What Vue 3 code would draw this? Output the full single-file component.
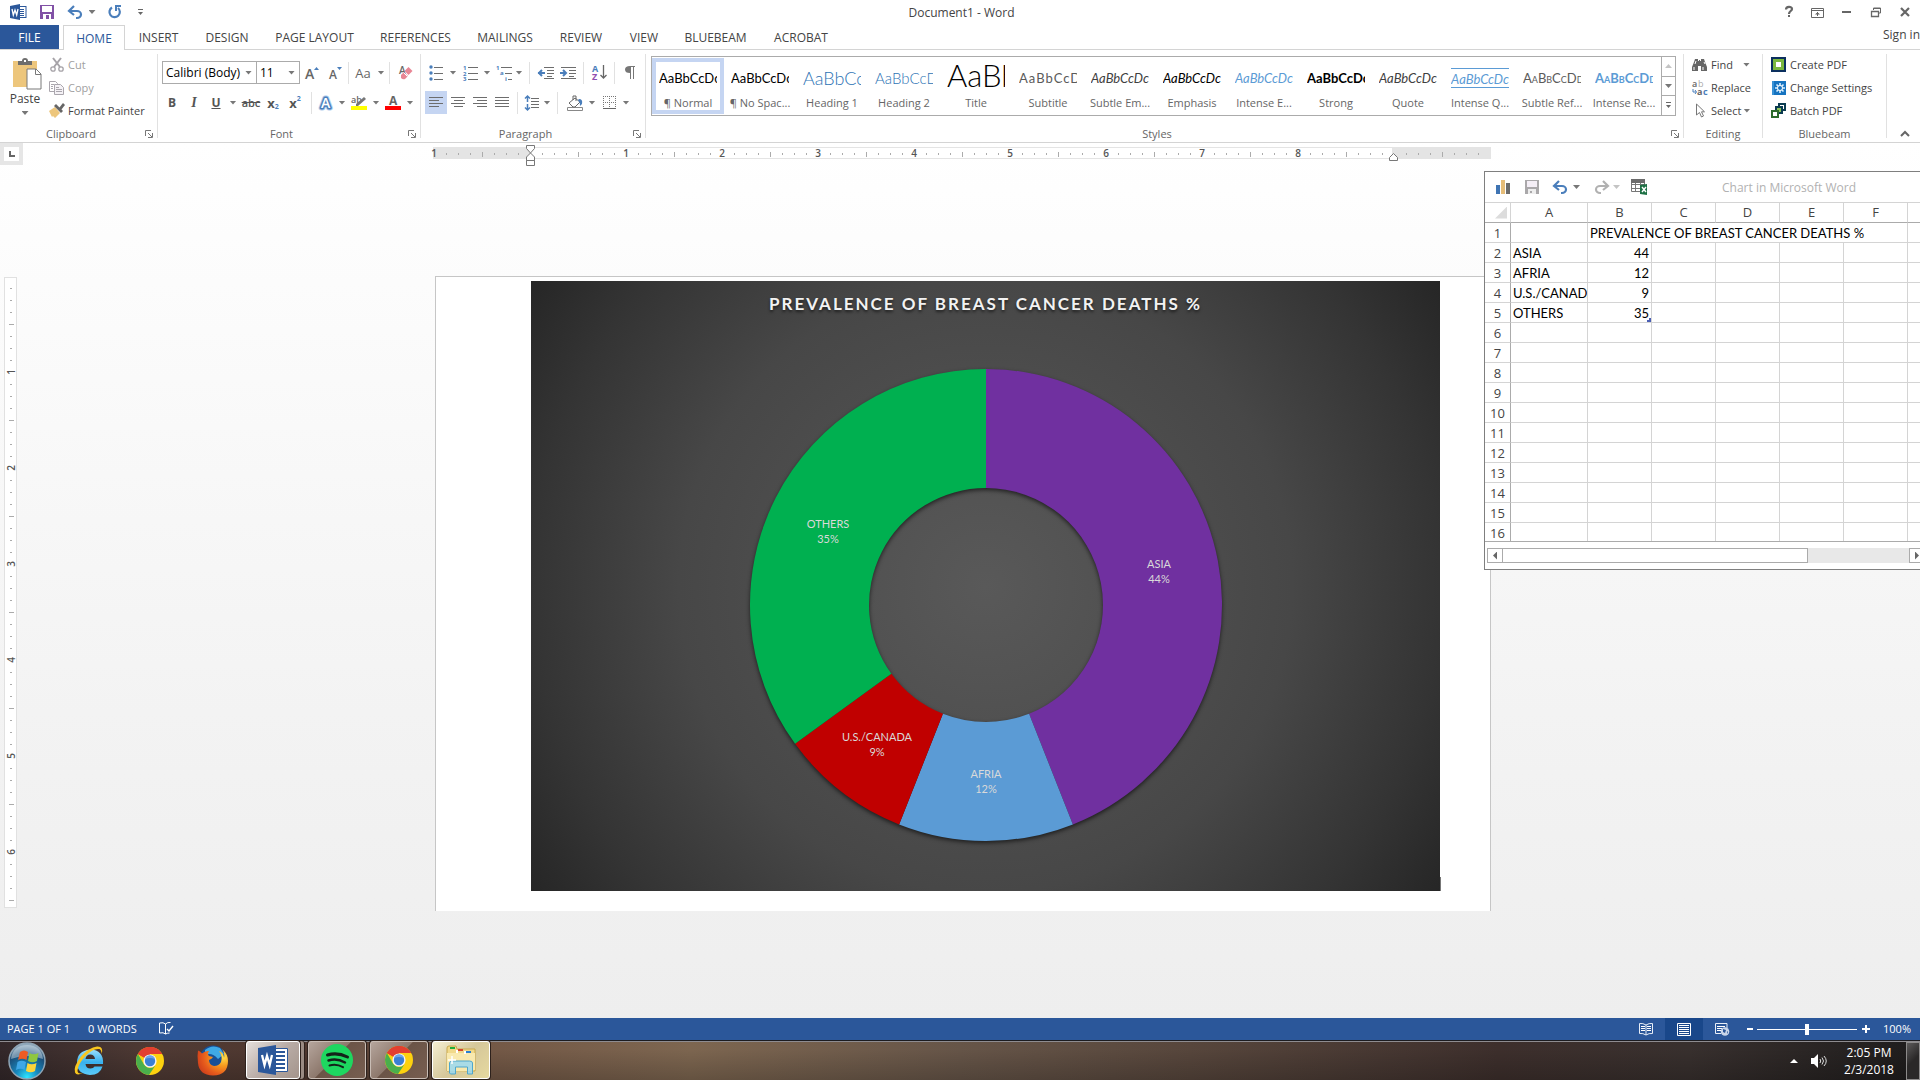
<script setup>
import { h, ref } from 'vue'

const blue = '#4a7ebb'
const grey = '#6d6d6d'
const lines = (rows, c = grey) => rows.map(([x, y, w]) => `<rect x="${x}" y="${y}" width="${w}" height="1" fill="${c}"/>`).join('')
const chromeBody = `<circle cx="14" cy="14" r="14" fill="#fdd10f"/><path d="M14 14 1.9 7A14 14 0 0 1 26.1 7L14 7z" fill="#de3a2b"/><path d="M14 0a14 14 0 0 1 12.1 7H14a7 7 0 0 0-6 3.5L1.9 7A14 14 0 0 1 14 0z" fill="#e23f30"/><path d="M1.9 7A14 14 0 0 0 13 28l6.2-9.3A7 7 0 0 1 8 17.6z" fill="#4aaf4c"/><circle cx="14" cy="14" r="6.6" fill="#f4f4f4"/><circle cx="14" cy="14" r="5.2" fill="#3b7fd4"/><path d="M9 12a5.2 5.2 0 0 1 10 0q-5-2-10 0z" fill="#6fa5e6"/>`

/* [width, height, drawing] */
const icons = {
  word: [17, 16, `<rect x="9" y="2.500" width="7" height="11" fill="#fff" stroke="#2b579a"/>${lines([[10, 5, 4], [10, 7, 4], [10, 9, 4], [10, 11, 4]], '#2b579a')}<path d="M0 2 10 0v16L0 14z" fill="#2b579a"/><path d="m2 5 1.300 6L5 6l1.700 5L8 5" fill="none" stroke="#fff" stroke-width="1.300"/>`],
  save: [14, 14, `<path d="M0 0h14v14H0z" fill="#8151a6"/><path d="M2 1h10v6H2z" fill="#fff"/><path d="M3 9h8v5H3z" fill="#fff"/><path d="M6 10h3v4H6z" fill="#8151a6"/>`],
  saveGrey: [14, 14, `<path d="M0 0h14v14H0z" fill="#aaa8aa"/><path d="M2 1h10v6H2z" fill="#f4eef6"/><path d="M3 9h8v5H3z" fill="#eee"/><path d="M5 11h2v2H5z" fill="#aaa8aa"/>`],
  undo: [15, 13, `<path d="M2 5h7a4 3.500 0 0 1 0 7H8" fill="none" stroke="${blue}" stroke-width="2.200"/><path d="M6 0 1 5l5 4" fill="none" stroke="${blue}" stroke-width="2.200"/>`],
  redoGrey: [15, 13, `<path d="M13 5H6a4 3.500 0 0 0 0 7h1" fill="none" stroke="#b1b1b1" stroke-width="2.200"/><path d="m9 0 5 5-5 4" fill="none" stroke="#b1b1b1" stroke-width="2.200"/>`],
  redo: [14, 14, `<path d="M4 2.500a5.200 5.200 0 1 0 6 .5" fill="none" stroke="${blue}" stroke-width="2.200"/><path d="M8 6V1h5" fill="none" stroke="${blue}" stroke-width="2"/>`],
  more: [7, 7, `<path d="M1 0h5v1H1z" fill="#666"/><path d="M1 3h5L3.500 6z" fill="#666"/>`],
  help: [8, 12, `<path d="M1 3.500C1 0 7 0 7 3c0 2-3 2.200-3 5" fill="none" stroke="#666" stroke-width="2.200"/><path d="M3 9h2v2H3z" fill="#666"/>`],
  display: [13, 11, `<path d="M.5 1.500h12v9H.5zM.5 3.500h12" fill="none" stroke="#666"/><path d="M6 5h1v4H6zM4 7.500 6.500 5 9 7.500z" fill="#666"/>`],
  min: [9, 3, '<path d="M0 0h9v2H0z" fill="#666"/>'],
  restore: [10, 10, `<path d="M2.500 3V1h7v5H8M2 1.500h8" fill="none" stroke="#666"/><path d="M.5 4.500h7v5h-7zM0 4.500h8" fill="none" stroke="#666" stroke-width="1.300"/>`],
  close: [10, 10, '<path d="m1 1 8 8M9 1 1 9" stroke="#666" stroke-width="2.200"/>'],
  paste: [30, 32, `<path d="M1 3h24v26H1z" fill="#edc67c"/><path d="M6 7V3h4q0-3 3-3t3 3h4v4z" fill="#6d6d6d"/><path d="M12 2h2v2h-2z" fill="#fff"/><path d="M15 11h9l5 5v15H15z" fill="#fff" stroke="#787878"/><path d="M23.500 11v5.500H29" fill="none" stroke="#787878"/>`],
  cut: [14, 14, `<path d="m3 0 7 9M11 0 4 9" stroke="#a6a3a8" stroke-width="2"/><circle cx="3" cy="11" r="2.200" fill="none" stroke="#a6a3a8" stroke-width="1.300"/><circle cx="11" cy="11" r="2.200" fill="none" stroke="#a6a3a8" stroke-width="1.300"/>`],
  copy: [15, 14, `<path d="M.5.5h6l2 2v8h-8z" fill="#fff" stroke="#aaa6ad"/><path d="M5.500 3.500h6l3 3v7h-9z" fill="#f5f2f6" stroke="#aaa6ad"/>${lines([[2, 3, 3], [2, 5, 2], [2, 7, 2], [7, 6, 3], [7, 8, 6], [7, 10, 6]], '#aaa6ad')}`],
  painter: [16, 15, `<path d="m0 8 6-4 5 6-5 5-2-2-1 1z" fill="#edc67c"/><path d="m5 3 2-2 7 7-2 2z" fill="#666"/><path d="m10 5 4-5 2 2-4 5z" fill="#666"/>`],
  launch: [8, 8, `<path d="M.5 6V.5H6" fill="none" stroke="#777"/><path d="m3 3 4 4M7.500 3v4.500H3" fill="none" stroke="#777"/>`],
  grow: [14, 14, `<path d="M9 4h5l-2.500-3z" fill="${blue}"/><text x="0" y="13" font-size="14" font-weight="600" fill="#666">A</text>`],
  shrink: [14, 14, `<path d="M9 1h5l-2.500 3z" fill="${blue}"/><text x="1" y="13" font-size="12" font-weight="600" fill="#666">A</text>`],
  eraser: [15, 15, `<text x="1" y="9" font-size="10" font-weight="600" fill="#666">A</text><path d="m3 10 3-3 4 4-3 3q-2 1-4-1z" fill="#e88594"/><path d="m6.500 6 4-4 4 4-4 4z" fill="#e88594"/><path d="m5.500 7.500 4 4" stroke="#fff"/>`],
  fx: [16, 16, `<g font-size="14" font-weight="600" stroke-linejoin="round" style="paint-order:stroke"><text x="3" y="13" fill="#b5d0ee" stroke="#b5d0ee" stroke-width="5">A</text><text x="3" y="13" fill="#fff" stroke="${blue}" stroke-width="3">A</text></g>`],
  highlight: [16, 15, `<text x="0" y="8" font-size="9" font-weight="600" fill="#666">ab</text><path d="m5 9 8-7 2 2-8 7H5z" fill="#777"/><path d="M0 11h16v4H0z" fill="#ff0"/>`],
  fontColor: [16, 15, `<text x="4" y="10" font-size="12" font-weight="700" fill="#666">A</text><path d="M0 11h16v4H0z" fill="#f00"/>`],
  bullets: [14, 16, `<circle cx="2" cy="2" r="1.700" fill="${blue}"/><circle cx="2" cy="8" r="1.700" fill="${blue}"/><circle cx="2" cy="14" r="1.700" fill="${blue}"/>${lines([[5, 2, 9], [5, 8, 9], [5, 14, 9]])}`],
  numbers: [15, 16, `<g font-size="6" font-weight="700" fill="${blue}"><text x="0" y="5">1</text><text x="0" y="11">2</text><text x="0" y="16">3</text></g>${lines([[5, 2, 10], [5, 8, 10], [5, 14, 10]])}`],
  multi: [17, 16, `<g font-size="6" font-weight="700" fill="${blue}"><text x="0" y="5">1</text><text x="4" y="10">a</text><text x="9" y="16">i</text></g>${lines([[5, 2, 11], [9, 8, 7], [12, 14, 4]])}`],
  outdent: [16, 12, `<path d="M0 6h7M4 3 1 6l3 3" fill="none" stroke="${blue}" stroke-width="2"/>${lines([[6, 0, 10], [9, 3, 7], [9, 6, 7], [9, 9, 5], [6, 11, 10]])}`],
  indent: [16, 12, `<path d="M0 6h6M3 3l3 3-3 3" fill="none" stroke="${blue}" stroke-width="2"/>${lines([[1, 0, 15], [9, 3, 7], [9, 6, 7], [9, 9, 5], [1, 11, 15]])}`],
  sort: [15, 17, `<text x="0" y="8" font-size="9" font-weight="700" fill="${blue}">A</text><text x="0" y="16" font-size="9" font-weight="700" fill="#8f4fb0">Z</text><path d="M11.500 1v13M8.500 11l3 3 3-3" fill="none" stroke="#666" stroke-width="1.300"/>`],
  pilcrow: [10, 13, `<path d="M10 0v1H9v12H8V1H6v12H5V7Q0 7 0 3.500T5 0z" fill="#777"/>`],
  left: [14, 11, lines([[0, 0, 14], [0, 3, 10], [0, 6, 14], [0, 9, 10]])],
  center: [14, 11, lines([[0, 0, 14], [3, 3, 9], [0, 6, 14], [3, 9, 9]])],
  right: [14, 11, lines([[0, 0, 14], [4, 3, 10], [0, 6, 14], [4, 9, 10]])],
  justify: [14, 11, lines([[0, 0, 14], [0, 3, 14], [0, 6, 14], [0, 9, 14]])],
  spacing: [15, 16, `<path d="M2.500 1v6M0 3.500 2.500 1 5 3.500M2.500 9v6M0 12.500 2.500 15 5 12.500" fill="none" stroke="${blue}" stroke-width="1.500"/>${lines([[6, 3, 8], [6, 6, 8], [6, 9, 8], [6, 12, 8]])}`],
  shading: [17, 16, `<path d="M.5 12.500h15v3H.5z" fill="#fff" stroke="#888"/><path d="m2 8 6-5 5 4-5 5H6z" fill="#fff" stroke="#666"/><path d="M6 5V1h3v5" fill="none" stroke="#666"/><path d="M12 4q4 0 3 5l-2 2q0-4-2-6z" fill="${blue}"/>`],
  borders: [13, 13, `<path d="M.5 0v12M12.500 0v12M6.500 0v12M0 .5h13M0 6.500h13" stroke="#777" stroke-dasharray="1 1" fill="none"/><path d="M0 12h13v1H0z" fill="#666"/>`],
  find: [15, 13, `<path d="M3 1h3v2h1V2h1v1h1V1h3l1 3 2 5v4H9V8H6v5H0V9l2-5z" fill="#666"/><path d="M2 9v3M11 9v3M4 3l-1 3M12 4l1 2" stroke="#fff"/>`],
  replace: [16, 16, `<text x="0" y="7" font-size="9" font-weight="600" fill="#666">a</text><text x="6" y="7" font-size="9" fill="#aaa">b</text><text x="5" y="15" font-size="9" font-weight="700" fill="#666">a</text><text x="11" y="15" font-size="9" font-weight="700" fill="${blue}">c</text><path d="M1 9v3h3M3 10l1.500 2L3 14" fill="none" stroke="${blue}"/>`],
  select: [10, 15, `<path d="M1.500 1v11l3-2.500 2 4.500 2-1-2-4.200h3z" fill="#fff" stroke="#777"/>`],
  create: [15, 15, `<path d="M0 0h15v15H0z" fill="#0b2f5e"/><path d="M2 2h11v11H2z" fill="#7ab83f"/><path d="M5 5h5v5H5z" fill="#fff"/>`],
  settings: [14, 14, `<path d="M0 0h14v14H0z" fill="#1673c0"/><path d="M1 0v14" stroke="#5fb1ea"/><path d="M8 2v10M3 7h10M4.500 3.500l7 7M11.500 3.500l-7 7" stroke="#d9efff" stroke-width="1.600"/><circle cx="8" cy="7" r="2.500" fill="#1673c0" stroke="#fff"/>`],
  batch: [15, 15, `<g stroke="#0b3b50" stroke-width="2" fill="#fff"><path d="M8 1h6v6H8z"/><path d="M5 4h6v6H5z" fill="#8fc45a"/><path d="M1 8h6v6H1z" stroke="#2d6b2d"/></g><path d="M3 10h2v2H3z" fill="#fff"/>`],
  collapse: [10, 6, '<path d="m1 5 4-4 4 4" fill="none" stroke="#666" stroke-width="2"/>'],
  chart: [15, 14, `<path d="M0 5h4v9H0z" fill="#3f74b3"/><path d="M5 0h4v14H5z" fill="#e6bd78"/><path d="M10 3h4v11h-4z" fill="#6b6b6b"/>`],
  sheet: [17, 16, `<path d="M.5 1.500h13v11H.5zM.5 5.500h13M.5 9.500h13M4.500 2v10M9.500 2v10" fill="#fff" stroke="#777"/><path d="M0 0h14v4H0z" fill="#6b6b6b"/><path d="m9 6 7-1v11l-7-1z" fill="#1e7145"/><path d="m11 8 4 5M15 8l-4 5" stroke="#fff" stroke-width="1.400"/>`],
  proof: [15, 14, `<path d="M6.500 2v10q-2-2-6-1V1q4-1 6 1 2-2 5-1.500M6.500 12q2-1 4-1" fill="none" stroke="#fff"/><path d="m8 7 2 2 4-5" fill="none" stroke="#fff" stroke-width="1.400"/>`],
  read: [14, 13, `<path d="M7 2Q4 0 .5.500v10Q4 10 7 12q3-2 6.500-1.500V.500Q10 0 7 2v10" fill="none" stroke="#e8eef7"/>${lines([[2, 3, 4], [2, 5, 4], [2, 7, 4], [8, 3, 4], [8, 5, 4], [8, 7, 4]], '#fff')}`],
  print: [14, 13, `<path d="M.5.500h13v12H.5z" fill="none" stroke="#fff"/>${lines([[2, 2, 10], [2, 4, 10], [2, 6, 10], [2, 8, 10], [2, 10, 10]], '#fff')}`],
  web: [15, 13, `<path d="M12 5V.500H.500v10H6" fill="none" stroke="#e8eef7"/>${lines([[2, 3, 8], [2, 5, 5], [2, 7, 4]], '#fff')}<circle cx="10" cy="8.500" r="4.300" fill="#c9d6ea"/><path d="m8 6 3 1-1 3-2-1zM12 8l1 1-1 2z" fill="#2b579a"/>`],
  orb: [38, 38, `<defs><radialGradient id="orb" cx=".5" cy=".95" r=".9"><stop offset="0" stop-color="#2ee6ff"/><stop offset=".35" stop-color="#1787bd"/><stop offset=".75" stop-color="#1b4d77"/><stop offset="1" stop-color="#8fa9bb"/></radialGradient></defs><circle cx="19" cy="19" r="18" fill="url(#orb)" stroke="#8fa5b5" stroke-width="1.500"/><path d="M3 17Q5 3 19 3t16 14q-16-6-32 0z" fill="#dfeaf2" opacity=".45"/><path d="M12 10q4-3 8 0l-1.500 8q-4-2.500-8.500 0z" fill="#ee5b23"/><path d="M21.500 11q4 2.500 9 0L29 19q-4 2.500-9 0z" fill="#8fc73e"/><path d="M9.500 20q4-2.500 8.500 0L16.500 28q-4-2.500-8.500 0z" fill="#3fa7e6"/><path d="M19.500 21q4 2.500 9 0L27 29q-4 2.500-9 0z" fill="#fdd43a"/>`],
  ie: [31, 31, `<defs><linearGradient id="ieg" x2="0" y2="1"><stop stop-color="#9be0fb"/><stop offset=".5" stop-color="#38b1ee"/><stop offset="1" stop-color="#5ccaf7"/></linearGradient></defs><path d="M30 19H12.500q.5 4.500 5 4.500 3 0 4-2h8Q27 30 17 30 4 29 4 17.500T17 4.500Q31 5 30 19zM12.500 14h9.500q-.5-4.500-4.700-4.500T12.500 14z" fill="url(#ieg)"/><path d="M28.500 9Q31 1 24 1.500 16 2.500 8 11.500 0 22 2 27.500 3.500 31 10 28 4.500 29.500 4.500 25.500 5 19 12.500 11T26.500 4q2 1 2 5z" fill="#f8c61f"/>`],
  chrome: [28, 28, chromeBody],
  firefox: [31, 31, `<defs><radialGradient id="fx" cx=".85" cy=".3" r=".95"><stop stop-color="#ffe14a"/><stop offset=".35" stop-color="#f79a1e"/><stop offset=".7" stop-color="#e65a1c"/><stop offset="1" stop-color="#c93a1b"/></radialGradient></defs><circle cx="16" cy="14" r="13.500" fill="#184f96"/><path d="M8 5q7-6 15-2l4 6-6 5q-6-7-13-4z" fill="#3fa9e6"/><path d="M1 5.500q2 .5 4 3Q8 5.500 12 6q-2 3 0 5l4 1q-1 2-4 3 0 5 5 6 5 0 7-4 2-5-2-11 5 2 5 7 1-5-2-9 6 5 6 12 0 14-15 14.500Q2 30 1 18 0 11 1 5.500z" fill="url(#fx)"/>`],
  wordBig: [31, 30, `<path d="M15.500 3.500h14v23h-14z" fill="#fff" stroke="#2b579a"/><path d="M18 7h9M18 11h9M18 15h9M18 19h9M18 23h9" stroke="#2b579a" stroke-width="2"/><path d="M0 3 18 0v30L0 27z" fill="#2b579a"/><path d="m4 10 2.500 10L9 11l2.700 9L14 10" fill="none" stroke="#fff" stroke-width="2.300"/>`],
  spotify: [32, 32, `<circle cx="16" cy="16" r="16" fill="#1ed760"/><g fill="none" stroke="#14221a" stroke-linecap="round"><path d="M6.500 11q10-3 20 2" stroke-width="3"/><path d="M7.500 16.500q8.500-2.500 16.500 2" stroke-width="2.500"/><path d="M8.500 21.500q7-2 13.500 1.700" stroke-width="2"/></g>`],
  explorer: [32, 30, `<path d="M2 3q0-2 2-2h7l1 3h18v22H2z" fill="#f1d98a" stroke="#c8a84e"/><path d="M5 2h5v2H5z" fill="#1fae3c"/><path d="M13 4h5v2h-5z" fill="#d5462b"/><path d="M21 6h5v2h-5z" fill="#2a7fd0"/><path d="M2 8h28v17q-8 2-28 1z" fill="#f9e9ae"/><path d="M12 5v3M20 6v3" stroke="#fff" stroke-width="2"/><path d="M4.500 28V18q0-2 3-2h17q3 0 3 2v11h-5v-7h-12v7h-5z" fill="#9bd8f0" fill-opacity=".85" stroke="#4fa6cc"/><path d="M7 11v8M3 15h8" stroke="#fff" stroke-width="1.500"/>`],
  up: [8, 5, '<path d="m0 5 4-4 4 4z" fill="#fff"/>'],
  speaker: [16, 14, `<path d="M0 4h3l4-4v14l-4-4H0z" fill="#fff"/><path d="M9 5q1.500 2 0 4M11 3.500q3 3.500 0 7M13 2q4.500 5 0 10" fill="none" stroke="#ddd"/>`],
}
const Icon = (p) => {
  const [w, ht, body] = icons[p.n]
  return h('svg', { width: w, height: ht, viewBox: `0 0 ${w} ${ht}`, overflow: 'visible', 'aria-hidden': 'true', 'font-family': 'Open Sans, sans-serif', innerHTML: body })
}

const tabs = ['INSERT', 'DESIGN', 'PAGE LAYOUT', 'REFERENCES', 'MAILINGS', 'REVIEW', 'VIEW', 'BLUEBEAM', 'ACROBAT']

/* toolbar entries: i = icon, t = text glyph, c = caret, s = separator */
const fontTop = [
  { i: 'grow', w: 24, l: 'Grow font' }, { i: 'shrink', w: 22, l: 'Shrink font' }, { s: 1, w: 4 },
  { t: 'Aa', k: 'aa', w: 26 }, { c: 1, w: 10, l: 'Case options' }, { s: 1, w: 6 }, { i: 'eraser', w: 26, l: 'Clear formatting' },
]
const fontBottom = [
  { t: 'B', k: 'b', w: 22 }, { t: 'I', k: 'i', w: 22 }, { t: 'U', k: 'u', w: 22 }, { c: 1, w: 12, l: 'Underline options' },
  { t: 'abc', k: 'strike', w: 24 }, { t: 'x', sub: '2', k: 'x', w: 20 }, { t: 'x', sup: '2', k: 'x', w: 24 }, { s: 1, w: 8 },
  { i: 'fx', w: 22, l: 'Text effects' }, { c: 1, w: 10, l: 'Text effect options' },
  { i: 'highlight', w: 24, l: 'Highlight' }, { c: 1, w: 10, l: 'Highlight options' },
  { i: 'fontColor', w: 24, l: 'Font color' }, { c: 1, w: 10, l: 'Font color options' },
]
const paraTop = [
  { i: 'bullets', w: 22, l: 'Bullets' }, { c: 1, w: 12, l: 'Bullet options' }, { i: 'numbers', w: 22, l: 'Numbering' }, { c: 1, w: 12, l: 'Number options' },
  { i: 'multi', w: 22, l: 'Multilevel list' }, { c: 1, w: 8, l: 'List options' }, { s: 1, w: 12 },
  { i: 'outdent', w: 22, l: 'Decrease indent' }, { i: 'indent', w: 22, l: 'Increase indent' }, { s: 1, w: 8 },
  { i: 'sort', w: 24, l: 'Sort' }, { s: 1, w: 6 }, { i: 'pilcrow', w: 26, l: 'Show marks' },
]
const paraBottom = [
  { i: 'left', w: 22, l: 'Align left', on: true }, { i: 'center', w: 22, l: 'Center' }, { i: 'right', w: 22, l: 'Align right' }, { i: 'justify', w: 22, l: 'Justify' },
  { s: 1, w: 8 }, { i: 'spacing', w: 22, l: 'Line spacing' }, { c: 1, w: 8, l: 'Spacing options' }, { s: 1, w: 12 },
  { i: 'shading', w: 24, l: 'Shading' }, { c: 1, w: 10, l: 'Shading options' }, { i: 'borders', w: 24, l: 'Borders' }, { c: 1, w: 10, l: 'Border options' },
]
const styleList = [
  ['¶ Normal', 'AaBbCcDc', 'normal'], ['¶ No Spac...', 'AaBbCcDc', 'normal'], ['Heading 1', 'AaBbCc', 'h1'], ['Heading 2', 'AaBbCcD', 'h2'],
  ['Title', 'AaBb', 'title'], ['Subtitle', 'AaBbCcD', 'subtitle'], ['Subtle Em...', 'AaBbCcDc', 'subtle'], ['Emphasis', 'AaBbCcDc', 'em'],
  ['Intense E...', 'AaBbCcDc', 'intense'], ['Strong', 'AaBbCcDc', 'strong'], ['Quote', 'AaBbCcDc', 'subtle'], ['Intense Q...', 'AaBbCcDc', 'intense ruled'],
  ['Subtle Ref...', 'AaBbCcDd', 'caps'], ['Intense Re...', 'AaBbCcDd', 'caps bluecaps'],
]

/* ruler marks: one every eighth of an inch, 96px to the inch */
const ticks = (from, to) => {
  const out = []
  for (let k = from; k <= to; k++) out.push({ p: k * 12, n: k % 8 === 0 && k ? Math.abs(k / 8) : 0, half: k % 8 === 4 || k % 8 === -4, zero: k === 0 })
  return out
}
const hTicks = ticks(-8, 79).filter((t) => !t.zero && t.p !== 864)
const vTicks = ticks(1, 52)

const slices = [
  { name: 'ASIA', value: 44, color: '#7030a0', x: 628, y: 287 },
  { name: 'AFRIA', value: 12, color: '#5b9bd5', x: 455, y: 497 },
  { name: 'U.S./CANADA', value: 9, color: '#c00000', x: 346, y: 460 },
  { name: 'OTHERS', value: 35, color: '#00b050', x: 297, y: 247 },
]
const cx = 455
const cy = 324
let acc = 0
const pt = (f, r) => `${(cx + r * Math.sin(f * 2 * Math.PI)).toFixed(2)} ${(cy - r * Math.cos(f * 2 * Math.PI)).toFixed(2)}`
for (const s of slices) {
  const a = acc
  acc += s.value / 100
  s.d = `M${pt(a, 236)}A236 236 0 0 1 ${pt(acc, 236)}L${pt(acc, 117)}A117 117 0 0 0 ${pt(a, 117)}z`
}

const cols = ['A', 'B', 'C', 'D', 'E', 'F', 'G']
const sheet = [['ASIA', 44], ['AFRIA', 12], ['U.S./CANADA', 9], ['OTHERS', 35]]
const zoom = ref(50)
const font = ref('Calibri (Body)')
const size = ref('11')
</script>

<template>
  <div class="app">
    <header class="titlebar">
      <div class="quick">
        <span class="slot w28"><Icon n="word" /></span>
        <button class="slot w30" aria-label="Save"><Icon n="save" /></button>
        <button class="slot w26" aria-label="Undo"><Icon n="undo" /></button>
        <button class="slot w8" aria-label="Undo history"><i class="caret"></i></button>
        <button class="slot w38" aria-label="Redo"><Icon n="redo" /></button>
        <button class="slot w12" aria-label="Customize"><Icon n="more" /></button>
      </div>
      <span class="doc-title">Document1 - Word</span>
      <div class="window-buttons">
        <button class="slot w29" aria-label="Help"><Icon n="help" /></button>
        <button class="slot w29" aria-label="Ribbon display"><Icon n="display" /></button>
        <button class="slot w29" aria-label="Minimize"><Icon n="min" /></button>
        <button class="slot w29" aria-label="Restore"><Icon n="restore" /></button>
        <button class="slot w29" aria-label="Close"><Icon n="close" /></button>
      </div>
    </header>

    <nav class="tabs">
      <button class="file">FILE</button>
      <button class="home">HOME</button>
      <div class="rest"><button v-for="t in tabs" :key="t">{{ t }}</button></div>
      <a class="signin" href="#">Sign in</a>
    </nav>

    <section class="ribbon">
      <div class="group clipboard">
        <div class="body">
          <button class="paste"><Icon n="paste" /><span>Paste</span><i class="caret"></i></button>
          <div class="stack">
            <button class="off"><span class="ic"><Icon n="cut" /></span>Cut</button>
            <button class="off"><span class="ic"><Icon n="copy" /></span>Copy</button>
            <button><span class="ic"><Icon n="painter" /></span>Format Painter</button>
          </div>
        </div>
        <footer><span>Clipboard</span><button class="launch" aria-label="Clipboard settings"><Icon n="launch" /></button></footer>
      </div>

      <div class="group font">
        <div class="body rows">
          <div class="row">
            <span class="combo name"><select v-model="font" aria-label="Font"><option>Calibri (Body)</option></select><i class="caret"></i></span>
            <span class="combo size"><select v-model="size" aria-label="Font size"><option>11</option></select><i class="caret"></i></span>
            <template v-for="(b, k) in fontTop" :key="k">
              <i v-if="b.s" class="sep" :style="{ width: b.w + 'px' }"></i>
              <button v-else :class="['slot', b.k]" :style="{ width: b.w + 'px' }" :aria-label="b.l"><Icon v-if="b.i" :n="b.i" /><i v-else-if="b.c" class="caret"></i><template v-else>{{ b.t }}</template></button>
            </template>
          </div>
          <div class="row">
            <template v-for="(b, k) in fontBottom" :key="k">
              <i v-if="b.s" class="sep" :style="{ width: b.w + 'px' }"></i>
              <button v-else :class="['slot', b.k]" :style="{ width: b.w + 'px' }" :aria-label="b.l"><Icon v-if="b.i" :n="b.i" /><i v-else-if="b.c" class="caret"></i><template v-else>{{ b.t }}<sub v-if="b.sub">{{ b.sub }}</sub><sup v-if="b.sup">{{ b.sup }}</sup></template></button>
            </template>
          </div>
        </div>
        <footer><span>Font</span><button class="launch" aria-label="Font settings"><Icon n="launch" /></button></footer>
      </div>

      <div class="group paragraph">
        <div class="body rows">
          <div v-for="(r, ri) in [paraTop, paraBottom]" :key="ri" class="row">
            <template v-for="(b, k) in r" :key="k">
              <i v-if="b.s" class="sep" :style="{ width: b.w + 'px' }"></i>
              <button v-else :class="['slot', { on: b.on }]" :style="{ width: b.w + 'px' }" :aria-label="b.l"><Icon v-if="b.i" :n="b.i" /><i v-else class="caret"></i></button>
            </template>
          </div>
        </div>
        <footer><span>Paragraph</span><button class="launch" aria-label="Paragraph settings"><Icon n="launch" /></button></footer>
      </div>

      <div class="group styles">
        <div class="body">
          <div class="gallery">
            <div class="cards">
              <button v-for="(s, k) in styleList" :key="k" :class="['card', { chosen: k === 0 }]">
                <span :class="['sample', s[2]]"><span>{{ s[1] }}</span></span>
                <span class="label">{{ s[0] }}</span>
              </button>
            </div>
            <div class="scroller">
              <button aria-label="Scroll up"><i class="caret flip"></i></button>
              <button aria-label="Scroll down"><i class="caret"></i></button>
              <button aria-label="More styles"><Icon n="more" /></button>
            </div>
          </div>
        </div>
        <footer><span>Styles</span><button class="launch" aria-label="Style settings"><Icon n="launch" /></button></footer>
      </div>

      <div class="group editing">
        <div class="stack">
          <button><span class="ic"><Icon n="find" /></span>Find<i class="caret far"></i></button>
          <button><span class="ic"><Icon n="replace" /></span>Replace</button>
          <button><span class="ic"><Icon n="select" /></span>Select<i class="caret near"></i></button>
        </div>
        <footer><span>Editing</span></footer>
      </div>

      <div class="group bluebeam">
        <div class="stack">
          <button><span class="ic"><Icon n="create" /></span>Create PDF</button>
          <button><span class="ic"><Icon n="settings" /></span>Change Settings</button>
          <button><span class="ic"><Icon n="batch" /></span>Batch PDF</button>
        </div>
        <footer><span>Bluebeam</span></footer>
      </div>
      <button class="collapse" aria-label="Collapse ribbon"><Icon n="collapse" /></button>
    </section>

    <main class="workspace">
      <div class="ruler-row">
        <button class="tabstop" aria-label="Tab stop"><i></i></button>
        <svg class="hruler" width="1056" height="22" aria-hidden="true">
          <rect x="-2" y="4" width="1058" height="12" fill="#e4e4e4" />
          <rect x="95" y="5" width="862" height="10" fill="#fff" />
          <template v-for="t in hTicks" :key="t.p">
            <text v-if="t.n" :x="95 + t.p" y="14" text-anchor="middle">{{ t.n }}</text>
            <rect v-else :x="95 + t.p" :y="t.half ? 9 : 10" width="1" :height="t.half ? 5 : 2" fill="#ababab" />
          </template>
          <g fill="#fff" stroke="#777">
            <path d="M91.500 2.500h8v3l-4 4.500-4-4.500zM95.500 10l4 4v3.500h-8V14zM91.500 17.500h8v5h-8z" />
            <path d="m958.500 10.500 4 4v3h-8v-3z" />
          </g>
        </svg>
      </div>
      <div class="canvas">
        <svg class="vruler" width="13" height="631" aria-hidden="true">
          <rect x=".5" y=".5" width="12" height="630" fill="#fff" stroke="#e1e1e1" />
          <template v-for="t in vTicks" :key="t.p">
            <text v-if="t.n" :transform="`translate(11 ${t.p - 1}) rotate(-90)`" text-anchor="middle">{{ t.n }}</text>
            <rect v-else :x="t.half ? 5 : 6" :y="t.p - 1" :width="t.half ? 5 : 2" height="1" fill="#ababab" />
          </template>
        </svg>
        <article class="page">
          <figure class="chart">
            <h1>PREVALENCE OF BREAST CANCER DEATHS %</h1>
            <svg width="909" height="610" viewBox="0 0 909 610" role="img" aria-label="Doughnut chart">
              <g class="ring"><path v-for="s in slices" :key="s.name" :d="s.d" :fill="s.color" /></g>
              <text v-for="s in slices" :key="s.name" text-anchor="middle"><tspan :x="s.x" :y="s.y">{{ s.name }}</tspan><tspan :x="s.x" :y="s.y + 15">{{ s.value }}%</tspan></text>
            </svg>
          </figure>
          <i class="cursor"></i>
        </article>
      </div>

      <aside class="data-window">
        <div class="data-bar">
          <span class="slot w36"><Icon n="chart" /></span>
          <button class="slot w22" aria-label="Save data"><Icon n="saveGrey" /></button>
          <button class="slot w26 edit-undo" aria-label="Undo edit"><Icon n="undo" /></button>
          <i class="caret"></i>
          <button class="slot w24 edit-redo" aria-label="Redo edit"><Icon n="redoGrey" /></button>
          <i class="caret pale"></i>
          <button class="slot w38" aria-label="Edit in Excel"><Icon n="sheet" /></button>
          <span class="data-title">Chart in Microsoft Word</span>
        </div>
        <div class="grid">
          <table>
            <colgroup><col class="c0" /><col class="ca" /><col v-for="k in 6" :key="k" class="cb" /></colgroup>
            <thead><tr><th class="corner"><i></i></th><th v-for="c in cols" :key="c" scope="col">{{ c }}</th></tr></thead>
            <tbody>
              <tr><th scope="row">1</th><td></td><td colspan="5">PREVALENCE OF BREAST CANCER DEATHS %</td><td></td></tr>
              <tr v-for="(r, k) in sheet" :key="r[0]"><th scope="row">{{ k + 2 }}</th><td>{{ r[0] }}</td><td class="num" :class="{ last: k === 3 }">{{ r[1] }}</td><td v-for="e in 5" :key="e"></td></tr>
              <tr v-for="k in 11" :key="k"><th scope="row">{{ k + 5 }}</th><td v-for="e in 7" :key="e"></td></tr>
            </tbody>
          </table>
        </div>
        <div class="hscroll">
          <button aria-label="Scroll left"><i class="tri l"></i></button>
          <span class="thumb"></span><span class="track"></span>
          <button aria-label="Scroll right"><i class="tri r"></i></button>
        </div>
      </aside>
    </main>

    <div class="status">
      <span class="pages">PAGE 1 OF 1</span><span class="words">0 WORDS</span><Icon n="proof" />
      <div class="views">
        <button class="slot w38" aria-label="Read mode"><Icon n="read" /></button>
        <button class="slot w38 active" aria-label="Print layout"><Icon n="print" /></button>
        <button class="slot w38" aria-label="Web layout"><Icon n="web" /></button>
        <button class="step out" aria-label="Zoom out"><i class="minus"></i></button>
        <input v-model="zoom" type="range" min="0" max="100" aria-label="Zoom" />
        <button class="step" aria-label="Zoom in"><i class="plus"></i></button>
        <span class="percent">100%</span>
      </div>
    </div>

    <div class="taskbar">
      <button class="start" aria-label="Start"><Icon n="orb" /></button>
      <button class="pin" aria-label="Internet Explorer"><Icon n="ie" /></button>
      <button class="pin" aria-label="Chrome"><Icon n="chrome" /></button>
      <button class="pin" aria-label="Firefox"><Icon n="firefox" /></button>
      <button class="task current" aria-label="Word"><Icon n="wordBig" /></button>
      <button class="task" aria-label="Spotify"><Icon n="spotify" /></button>
      <button class="task" aria-label="Chrome window"><Icon n="chrome" /></button>
      <button class="task glow" aria-label="Explorer"><Icon n="explorer" /></button>
      <div class="tray">
        <button class="slot w28" aria-label="Hidden icons"><Icon n="up" /></button>
        <button class="slot w22" aria-label="Volume"><Icon n="speaker" /></button>
        <div class="clock"><span>2:05 PM</span><span>2/3/2018</span></div>
        <button class="desktop" aria-label="Show desktop"></button>
      </div>
    </div>
  </div>
</template>

<style>
body { margin: 0; overflow: hidden; }
</style>

<style scoped>
* { box-sizing: border-box; }
.app { display: flex; flex-direction: column; min-height: 100vh; overflow: hidden; font: 11px/16px "Open Sans", "Noto Sans", sans-serif; color: #444; background: #fff; }
button, select, input { font: inherit; color: inherit; margin: 0; padding: 0; border: 0; border-radius: 0; background: none; }
svg { display: block; flex: none; }
i { font-style: normal; }
.slot { display: flex; align-items: center; justify-content: center; flex: none; height: 24px; }
.w8 { width: 8px; } .w12 { width: 12px; } .w22 { width: 22px; } .w24 { width: 24px; } .w26 { width: 26px; } .w28 { width: 28px; } .w29 { width: 29px; } .w30 { width: 30px; } .w36 { width: 36px; } .w38 { width: 38px; }
.caret { flex: none; display: block; width: 7px; height: 4px; background: #777; clip-path: polygon(0 0, 100% 0, 50% 100%); }
.pale { background: #c4c4c4; }
.flip { transform: rotate(180deg); background: #c4c4c4; }

.titlebar { display: grid; grid-template-columns: 1fr auto 1fr; align-items: center; height: 25px; padding: 0 1px 3px 4px; }
.quick { display: flex; align-items: center; }
.doc-title { padding-top: 2px; font-size: 12px; }
.window-buttons { display: flex; justify-content: flex-end; }

.tabs { display: flex; height: 25px; border-bottom: 1px solid #d4d4d4; font-size: 12px; line-height: 24px; }
.tabs button { padding-top: 1px; text-align: center; white-space: nowrap; }
.tabs .file { width: 59px; background: #2b579a; color: #fff; }
.tabs .home { width: 62px; height: 25px; margin-left: 4px; border: 1px solid #d4d4d4; border-bottom: 0; background: #fff; color: #2b579a; }
.rest { display: grid; grid-template-columns: 67px 70px 105px 97px 82px 70px 56px 87px 84px; }
.signin { margin-left: auto; color: #444; text-decoration: none; line-height: 20px; }

.ribbon { display: flex; height: 93px; padding: 4px 0; border-bottom: 1px solid #d4d4d4; }
.group { display: flex; flex-direction: column; flex: none; border-right: 1px solid #e1e1e1; }
.group footer { display: flex; align-items: center; height: 16px; margin: auto 0 -4px; color: #666; }
.group footer span { flex: 1; text-align: center; }
.launch { margin: 0 4px 0 3px; width: 8px; height: 8px; }
.body { display: flex; }
.clipboard { width: 158px; }
.font { width: 263px; }
.paragraph { width: 225px; }
.styles { flex: 1; min-width: 0; }
.editing { width: 79px; }
.bluebeam { width: 124px; }
.paste { display: flex; flex-direction: column; align-items: center; width: 40px; margin: 4px 0 0 5px; font-size: 12px; gap: 1px; }
.paste svg { margin-left: 4px; }
.paste .caret { margin-top: 3px; }
.stack { display: flex; flex-direction: column; margin-top: -1px; }
.stack button { display: flex; align-items: center; height: 23px; text-align: left; white-space: nowrap; }
.ic { display: flex; justify-content: center; width: 23px; flex: none; }
.off { color: #a0a0a0; }
.bluebeam .stack, .editing .stack { padding-left: 4px; }
.far { margin-left: 10px; } .near { margin-left: 2px; }
.rows { flex-direction: column; }
.row { display: flex; align-items: center; height: 31px; padding-top: 4px; }
.row:first-child { padding-top: 6px; }
.font .row:first-child { padding-left: 4px; }
.font .row + .row { padding-left: 3px; }
.paragraph .row { padding-left: 4px; }
.combo { position: relative; display: flex; align-items: center; height: 23px; border: 1px solid #ababab; }
.combo select { appearance: none; width: 100%; height: 20px; padding-left: 3px; color: #000; font-size: 12px; }
.combo .caret { position: absolute; right: 4px; }
.name { width: 95px; } .size { width: 43px; border-left: 0; }
.sep { flex: none; height: 22px; background: linear-gradient(#e1e1e1, #e1e1e1) center / 1px 100% no-repeat; }
.row .on { height: 23px; background: #c5d5f2; }
.aa { font-size: 13px; color: #666; }
.b, .i, .u { font-size: 12px; font-weight: 700; color: #555; }
.i { font-family: "Liberation Serif", serif; font-size: 14px; font-style: italic; }
.u { text-decoration: underline; }
.strike { font-weight: 600; text-decoration: line-through; color: #555; }
.x { font-size: 13px; font-weight: 700; color: #555; }
sub, sup { font-size: 7px; line-height: 8px; color: #4a7ebb; }
sub { padding-top: 8px; } sup { padding-bottom: 8px; }

.styles .body { padding: 2px 7px 0 5px; }
.gallery { display: flex; flex: 1; min-width: 0; height: 60px; border: 1px solid #ababab; }
.cards { display: flex; flex: 1; min-width: 0; overflow: hidden; }
.card { flex: 0 0 72px; display: flex; flex-direction: column; align-items: center; height: 58px; padding: 1px 0 0; border: 0; }
.chosen { height: 56px; margin-top: 1px; padding: 0; box-shadow: inset 0 0 0 4px #c5d5f2; }
.sample { width: 58px; height: 36px; padding-top: 6px; overflow: hidden; display: flex; justify-content: flex-start; align-items: flex-start; white-space: nowrap; clip-path: inset(7px 0 0); font: 13px/28px Lato, sans-serif; color: #000; }
.label { white-space: nowrap; line-height: 18px; color: #666; }
.h1 { font-size: 18px; font-weight: 300; color: #2e74b5; }
.h2 { font-size: 15px; font-weight: 300; color: #2e74b5; }
.title { font-size: 31px; line-height: 22px; font-weight: 300; }
.subtitle { letter-spacing: 1px; color: #5a5a5a; }
.subtle { font-style: italic; color: #404040; }
.em { font-style: italic; }
.intense { font-style: italic; color: #5b9bd5; }
.strong { font-weight: 700; }
.ruled > span { flex: 1; height: 20px; margin-top: 4px; line-height: 20px; border: solid #5b9bd5; border-width: 1px 0; }
.caps { font-variant: small-caps; color: #5a5a5a; }
.bluecaps { font-weight: 700; color: #5b9bd5; }
.scroller { display: flex; flex-direction: column; width: 14px; border-left: 1px solid #ababab; }
.scroller button { flex: 1; display: flex; align-items: center; justify-content: center; }
.scroller button + button { border-top: 1px solid #ababab; }
.collapse { flex: none; margin: auto 8px -1px 13px; width: 12px; height: 10px; }

.workspace { position: relative; flex: 1; overflow: hidden; background: linear-gradient(#fff, #fcfcfc 16%, #f3f3f3 65%, #eee); }
.ruler-row { display: flex; height: 23px; }
.tabstop { width: 23px; height: 22px; margin-right: -23px; background: #fff; border: 4px solid #e6e6e6; display: flex; align-items: center; justify-content: center; }
.tabstop i { width: 6px; height: 6px; border: solid #666; border-width: 0 0 2px 2px; }
.hruler { margin: 0 auto; translate: 3px 0; overflow: visible; }
.hruler text, .vruler text { font-size: 10px; font-weight: 600; fill: #555; }
.canvas { display: flex; padding-top: 110px; }
.vruler { margin: 1px -17px 0 4px; overflow: visible; }
.page { display: flex; align-items: flex-end; width: 1056px; margin: 0 auto; translate: 3px 0; padding: 4px 0 20px 95px; background: #fff; border: solid #c6c6c6; border-width: 1px 1px 0; }
.chart { position: relative; margin: 0; background: radial-gradient(circle farthest-corner, #595959, #474747 56%, #343434 83%, #262626); }
.chart h1 { position: absolute; inset: 10px 0 auto; margin: 0; text-align: center; font: 700 17px/26px Lato, sans-serif; letter-spacing: 2px; color: #f2f2f2; text-shadow: 0 2px 3px #0009; }
.chart text { font: 11px Lato, sans-serif; fill: #d9d9d9; }
.ring { filter: drop-shadow(0 2px 2px #0009); }
.cursor { width: 1px; height: 14px; background: #777; }

.data-window { position: absolute; top: 28px; right: 0; width: 436px; background: #fff; border: solid #7f7f7f; border-width: 1px 0 1px 1px; overflow: hidden; }
.data-bar { display: flex; align-items: center; height: 30px; }
.edit-undo { margin-left: 4px; }
.edit-redo { margin-left: 9px; }
.data-title { flex: 1; padding: 2px 0 0; text-align: center; font-size: 12px; color: #b1b1b1; }
.grid { height: 340px; overflow: hidden; border-bottom: 1px solid #ababab; }
table { table-layout: fixed; border-collapse: separate; border-spacing: 0; width: 487px; }
.c0 { width: 26px; } .ca { width: 77px; } .cb { width: 64px; }
th, td { height: 20px; padding: 2px 0 0; overflow: hidden; white-space: nowrap; border: solid #d4d4d4; border-width: 0 1px 1px 0; line-height: 17px; }
th { font-weight: 400; font-size: 13px; color: #444; }
thead th { height: 21px; padding: 0; line-height: 19px; border-top: 1px solid #d4d4d4; border-bottom-color: #ababab; }
tbody th { border-right-color: #ababab; }
.corner i { display: block; width: 12px; height: 12px; margin-left: 10px; background: #dcdcdc; clip-path: polygon(100% 0, 100% 100%, 0 100%); }
td { padding-left: 2px; font-family: Lato, sans-serif; font-size: 13px; color: #000; }
.num { position: relative; text-align: right; padding-right: 2px; }
.last::after { content: ""; position: absolute; right: 0; bottom: 0; width: 4px; height: 4px; background: #4a5fb5; clip-path: polygon(50% 0, 100% 0, 100% 100%, 0 100%, 0 50%, 50% 50%); }
.hscroll { display: flex; height: 15px; margin: 6px -5px 6px 2px; background: #e8e8e8; }
.hscroll button { flex: none; width: 16px; background: #fff; border: 1px solid #ababab; display: flex; align-items: center; justify-content: center; }
.thumb { flex: 3; background: #fff; border: 1px solid #ababab; border-left: 0; }
.track { flex: 1; }
.tri { width: 4px; height: 8px; background: #666; }
.l { clip-path: polygon(100% 0, 100% 100%, 0 50%); } .r { clip-path: polygon(0 0, 0 100%, 100% 50%); }

.status { display: flex; align-items: center; height: 22px; padding: 0 9px 0 7px; background: #2b579a; color: #fff; }
.pages { width: 81px; } .words { width: 71px; }
.views { display: flex; align-items: center; margin-left: auto; height: 22px; }
.views .slot { height: 22px; }
.active { background: #19478a; }
.step { display: flex; align-items: center; justify-content: center; width: 11px; height: 12px; }
.out { margin-left: 3px; }
.minus { width: 6px; height: 2px; background: #fff; }
.plus { width: 8px; height: 8px; background: linear-gradient(#fff, #fff) center / 8px 2px no-repeat, linear-gradient(#fff, #fff) center / 2px 8px no-repeat; }
input[type="range"] { appearance: none; width: 100px; height: 12px; margin: 0 3px 0 2px; background: linear-gradient(#fff, #fff) center / 100% 1px no-repeat; }
input[type="range"]::-webkit-slider-thumb { appearance: none; width: 4px; height: 11px; background: #fff; border: 0; border-radius: 0; }
.percent { width: 40px; text-align: right; }

.taskbar { display: flex; height: 40px; border-top: 1px solid #1c1c20; box-shadow: inset 0 1px #8e8c90; background: linear-gradient(#0000, #0000 20%, #0003), linear-gradient(90deg, #33282a, #4f3a34 8%, #50382f 16%, #735846 25%, #7d6650 36%, #665548 50%, #57463c 62%, #3d2f2c 78%, #38302e 88%, #1e1c1c); }
.start { display: flex; align-items: center; width: 57px; padding-left: 8px; }
.pin { display: flex; align-items: center; justify-content: center; width: 62px; }
.task { display: flex; align-items: center; justify-content: center; width: 58px; margin: 0 4px 1px 0; border: 1px solid #c9bdb5; border-radius: 3px; box-shadow: 0 0 0 1px #2d211c; background: linear-gradient(135deg, #b5a59c, #8d786c 45%, #6b5447 46%, #775e50); }
.task.current { width: 54px; margin: 0 8px 1px 3px; border-color: #fff; background: linear-gradient(135deg, #e4dfdc, #b9aca6 50%, #a4948b); box-shadow: 0 0 0 1px #2d211c, 4px 0 #9a8b83, 5px 0 #2d211c; }
.task.glow { border-color: #fff; background: linear-gradient(135deg, #f5eed2, #d5c79a 50%, #e6d99f); }
.tray { display: flex; align-items: center; margin-left: auto; color: #fff; font-size: 12px; }
.clock { display: flex; flex-direction: column; align-items: center; width: 78px; line-height: 17px; }
.desktop { width: 14px; height: 38px; margin-left: -2px; border: 1px solid #8c8a8a; background: linear-gradient(135deg, #5c5a5a, #2a2828 50%); }
</style>
